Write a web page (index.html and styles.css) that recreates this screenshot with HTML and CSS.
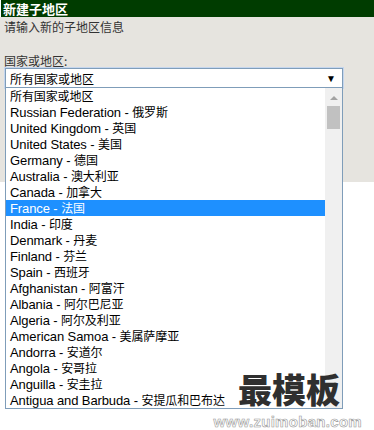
FILE: index.html
```html
<!DOCTYPE html>
<html lang="zh">
<head>
<meta charset="utf-8">
<link rel="stylesheet" href="styles.css">
</head>
<body>
<div class="titlebar">新建子地区</div>
<div class="panel">
  <div class="intro">请输入新的子地区信息</div>
  <div class="field">
    <div class="label">国家或地区:</div>
    <div class="select">
      <span class="zh">所有国家或地区</span>
      <span class="arrow">▼</span>
    </div>
    <div class="dropdown">
      <ul class="options">
        <li><span class="zh">所有国家或地区</span></li>
        <li>Russian Federation - <span class="zh">俄罗斯</span></li>
        <li>United Kingdom - <span class="zh">英国</span></li>
        <li>United States - <span class="zh">美国</span></li>
        <li>Germany - <span class="zh">德国</span></li>
        <li>Australia - <span class="zh">澳大利亚</span></li>
        <li>Canada - <span class="zh">加拿大</span></li>
        <li class="selected">France - <span class="zh">法国</span></li>
        <li>India - <span class="zh">印度</span></li>
        <li>Denmark - <span class="zh">丹麦</span></li>
        <li>Finland - <span class="zh">芬兰</span></li>
        <li>Spain - <span class="zh">西班牙</span></li>
        <li>Afghanistan - <span class="zh">阿富汗</span></li>
        <li>Albania - <span class="zh">阿尔巴尼亚</span></li>
        <li>Algeria - <span class="zh">阿尔及利亚</span></li>
        <li>American Samoa - <span class="zh">美属萨摩亚</span></li>
        <li>Andorra - <span class="zh">安道尔</span></li>
        <li>Angola - <span class="zh">安哥拉</span></li>
        <li>Anguilla - <span class="zh">安圭拉</span></li>
        <li>Antigua and Barbuda - <span class="zh">安提瓜和巴布达</span></li>
      </ul>
      <div class="scrollbar">
        <div class="up"></div>
        <div class="thumb"></div>
      </div>
    </div>
  </div>
</div>
<div class="watermark">
  <div class="wm-big">最模板</div>
  <div class="wm-url">www.zuimoban.com</div>
</div>
</body>
</html>
```
FILE: styles.css
```css
html, body {
  margin: 0;
  padding: 0;
  background: #ffffff;
  width: 374px;
  height: 430px;
  overflow: hidden;
  font-family: "Liberation Sans", "Noto Sans CJK SC", sans-serif;
  font-size: 13px;
  position: relative;
}

.zh {
  font-family: "Noto Sans CJK SC", sans-serif;
  font-size: 12px;
}

.titlebar {
  margin-left: 1px;
  height: 17px;
  line-height: 17px;
  background: #003c00;
  color: #ffffff;
  font-weight: bold;
  font-size: 13px;
  padding-left: 2px;
  font-family: "Noto Sans CJK SC", sans-serif;
}

.panel {
  background: #e6e4df;
  height: 165px;
  padding: 0 0 0 4px;
  color: #333333;
}

.intro {
  height: 20px;
  line-height: 20px;
  font-size: 12px;
  font-family: "Noto Sans CJK SC", sans-serif;
}

.field {
  position: relative;
  padding-top: 16px;
  width: 338px;
  margin-left: 1px;
}

.label {
  height: 15px;
  line-height: 15px;
  margin-left: -1px;
  font-size: 12px;
  font-family: "Noto Sans CJK SC", sans-serif;
}

.select {
  box-sizing: border-box;
  height: 20px;
  border: 1px solid #7f9db9;
  background: #ffffff;
  display: flex;
  align-items: center;
  justify-content: space-between;
  padding: 0 6px 0 4px;
  color: #000000;
  box-shadow: 0 0 0 1px #c5d6ee;
}

.arrow {
  font-size: 10px;
}

.dropdown {
  position: absolute;
  top: 51px;
  left: 0;
  width: 338px;
  height: 321px;
  box-sizing: border-box;
  border: 1px solid #7f9db9;
  border-top: none;
  background: #ffffff;
  display: flex;
}

.options {
  list-style: none;
  margin: 0;
  padding: 0;
  flex: 1;
}

.options li {
  height: 16px;
  line-height: 16px;
  padding-left: 4px;
  color: #000000;
  white-space: nowrap;
  letter-spacing: -0.1px;
}

.options li.selected {
  background: #1e90ff;
  color: #ffffff;
}

.scrollbar {
  width: 17px;
  background: #f0f0f0;
  display: flex;
  flex-direction: column;
  align-items: center;
}

.up {
  margin-top: 8px;
  width: 0;
  height: 0;
  border-left: 4px solid transparent;
  border-right: 4px solid transparent;
  border-bottom: 4px solid #a3a3a3;
}

.thumb {
  margin-top: 6px;
  width: 13px;
  height: 23px;
  background: #c1c1c1;
}

.watermark {
  position: absolute;
  right: 12px;
  top: 372px;
  display: flex;
  flex-direction: column;
  align-items: flex-end;
}

.wm-big {
  font-family: "Noto Sans CJK SC", sans-serif;
  font-weight: 900;
  font-size: 34px;
  line-height: 34px;
  height: 34px;
  color: #2f2f2f;
  margin-right: 22px;
  letter-spacing: 0;
}

.wm-url {
  margin-top: 9px;
  font-family: "Liberation Sans", sans-serif;
  font-weight: bold;
  font-size: 15px;
  line-height: 14px;
  color: #ffffff;
  -webkit-text-stroke: 0.6px #9a9a9a;
  letter-spacing: 0.3px;
}
```
